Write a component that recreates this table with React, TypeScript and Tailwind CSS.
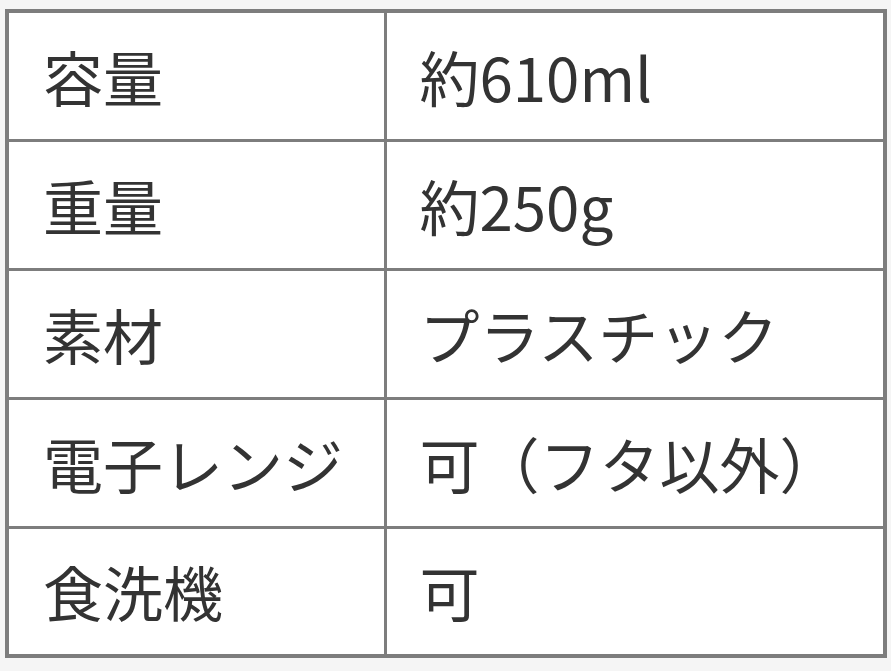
const rows: [string, string][] = [
  ['容量', '約610ml'],
  ['重量', '約250g'],
  ['素材', 'プラスチック'],
  ['電子レンジ', '可（フタ以外）'],
  ['食洗機', '可'],
];

export default function App() {
  return (
    <div className="w-[891px] h-[671px] bg-[#f5f5f5] pl-[5px] pt-[9px]">
      <table
        className="w-[882px] table-fixed border-collapse border-4 border-[#7d7d7d] bg-white text-[#333] text-[60px] leading-none"
        style={{ fontFamily: '"Noto Sans CJK JP", "Noto Sans", sans-serif' }}
      >
        <colgroup>
          <col className="w-[378px]" />
          <col />
        </colgroup>
        <tbody>
          {rows.map(([label, value]) => (
            <tr key={label} className="h-[129px]">
              <td className="border-[3px] border-[#7d7d7d] px-[34px] align-middle whitespace-nowrap">{label}</td>
              <td className="border-[3px] border-[#7d7d7d] px-[33px] align-middle whitespace-nowrap">{value}</td>
            </tr>
          ))}
        </tbody>
      </table>
    </div>
  );
}
